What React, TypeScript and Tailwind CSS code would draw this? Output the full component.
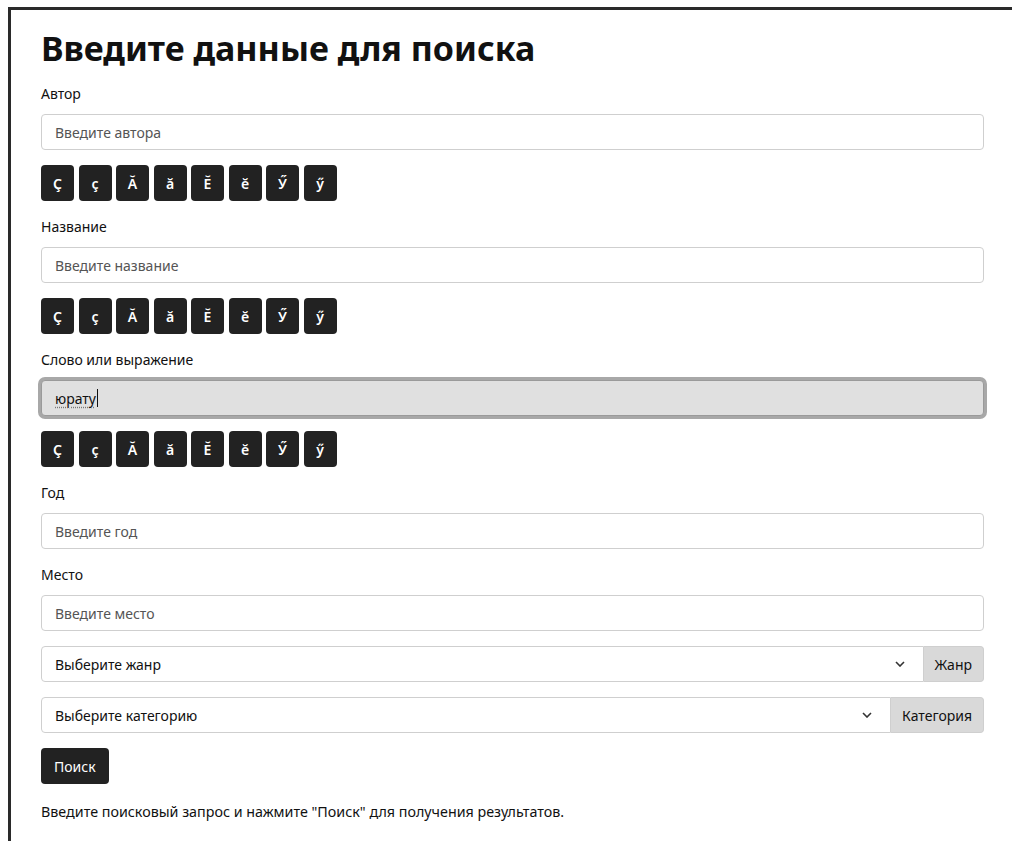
import React from "react";

const LETTERS = ["Ç", "ç", "Ă", "ă", "Ĕ", "ĕ", "Ӳ", "ӳ"];

function LetterKeys() {
  return (
    <div className="mt-[15px] flex gap-[4.5px]">
      {LETTERS.map((ch) => (
        <button
          key={ch}
          type="button"
          className="flex h-[36px] w-[33px] items-center justify-center rounded-[4px] bg-[#222222] text-[14px] font-semibold text-white"
        >
          {ch}
        </button>
      ))}
    </div>
  );
}

function Label({ children }: { children: React.ReactNode }) {
  return <label className="block text-[14px] leading-[24px] text-[#111]">{children}</label>;
}

function Field({ label, placeholder }: { label: string; placeholder: string }) {
  return (
    <div className="mt-[14px]">
      <Label>{label}</Label>
      <input
        className="mt-[8px] block h-[36px] w-full rounded-[4px] border border-[#cfcfcf] bg-white px-[13px] text-[14px] text-[#222] outline-none placeholder:text-[#555]"
        placeholder={placeholder}
      />
    </div>
  );
}

function Chevron() {
  return (
    <svg width="10" height="6" viewBox="0 0 10 6" className="shrink-0">
      <path d="M1 1l4 4 4-4" fill="none" stroke="#333" strokeWidth="1.6" />
    </svg>
  );
}

function SelectGroup({ text, addon }: { text: string; addon: string }) {
  return (
    <div className="mt-[15px] flex h-[36px] w-full">
      <div className="flex flex-1 items-center justify-between rounded-l-[4px] border border-[#cfcfcf] bg-white pl-[13px] pr-[18px] text-[14px] text-[#111]">
        <span>{text}</span>
        <Chevron />
      </div>
      <div className="flex items-center rounded-r-[4px] border border-l-0 border-[#cfcfcf] bg-[#d9d9d9] px-[11px] text-[14px] text-[#111]">
        {addon}
      </div>
    </div>
  );
}

export default function App() {
  return (
    <div className="min-h-screen bg-white pl-[8px] pt-[7px] font-['Noto_Sans',sans-serif]">
      <div className="min-h-[834px] border-l-[3px] border-t-[3px] border-[#2a2a2a] pl-[30px] pr-[28px] pt-[17px]">
        <h1 className="text-[34px] font-bold leading-[43px] text-[#111]">Введите данные для поиска</h1>

        <div className="-mt-[2px]">
          <Field label="Автор" placeholder="Введите автора" />
          <LetterKeys />

          <Field label="Название" placeholder="Введите название" />
          <LetterKeys />

          {/* поле в фокусе */}
          <div className="mt-[14px]">
            <Label>Слово или выражение</Label>
            <div className="mt-[8px] flex h-[36px] w-full items-center rounded-[4px] border border-[#9a9a9a] bg-[#e0e0e0] px-[13px] text-[14px] text-[#111] ring-[3px] ring-[#a8a8a8]">
              <span className="underline decoration-[#777] decoration-dotted underline-offset-[3px]">юрату</span>
              <span className="ml-[1px] inline-block h-[18px] w-[1px] bg-[#111]" />
            </div>
          </div>
          <LetterKeys />

          <Field label="Год" placeholder="Введите год" />
          <Field label="Место" placeholder="Введите место" />

          <SelectGroup text="Выберите жанр" addon="Жанр" />
          <SelectGroup text="Выберите категорию" addon="Категория" />

          <button
            type="button"
            className="mt-[15px] h-[36px] rounded-[4px] bg-[#222222] px-[13px] text-[14px] text-white"
          >
            Поиск
          </button>

          <p className="mt-[17px] text-[14.3px] text-[#111]">
            Введите поисковый запрос и нажмите "Поиск" для получения результатов.
          </p>
        </div>
      </div>
    </div>
  );
}
